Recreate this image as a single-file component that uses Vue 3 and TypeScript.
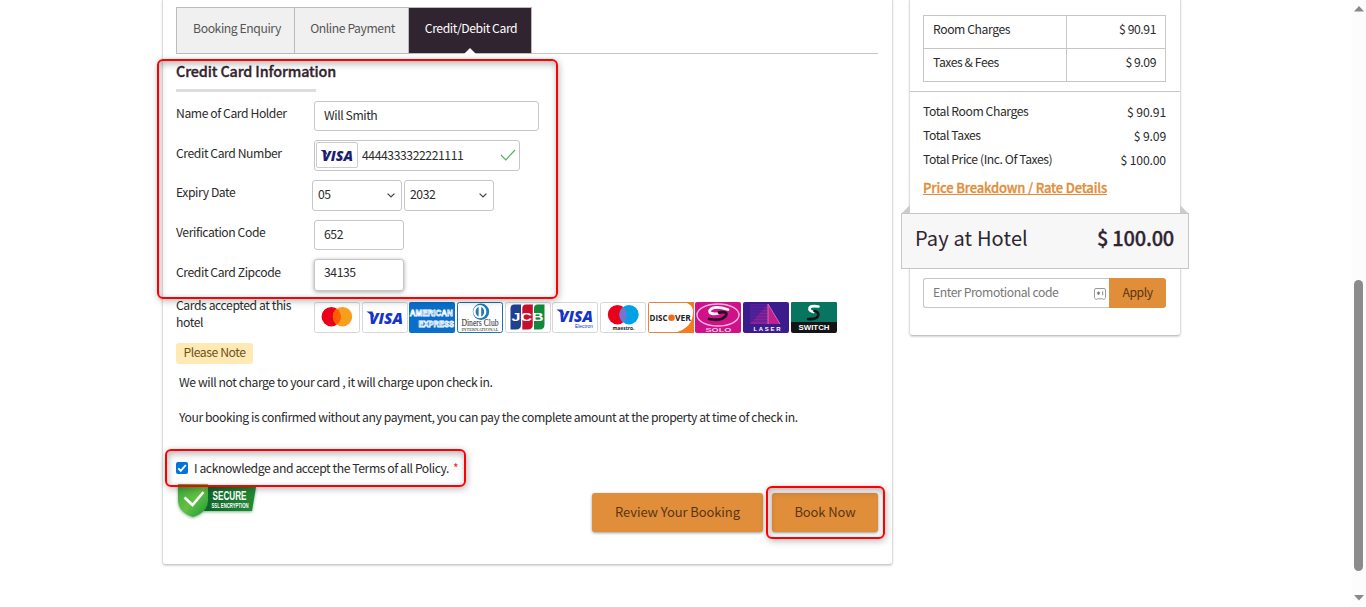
<script setup lang="ts">
import { ref } from 'vue'

interface Line { label: string; value: string }

const tabs: string[] = ['Booking Enquiry', 'Online Payment', 'Credit/Debit Card']
const activeTab = ref<number>(2)
const holder = ref<string>('Will Smith')
const cardNumber = ref<string>('4444333322221111')
const month = ref<string>('05')
const year = ref<string>('2032')
const cvv = ref<string>('652')
const zip = ref<string>('34135')
const promo = ref<string>('')
const accepted = ref<boolean>(true)

const charges: Line[] = [
  { label: 'Room Charges', value: '$ 90.91' },
  { label: 'Taxes & Fees', value: '$ 9.09' },
]
const totals: Line[] = [
  { label: 'Total Room Charges', value: '$ 90.91' },
  { label: 'Total Taxes', value: '$ 9.09' },
  { label: 'Total Price (Inc. Of Taxes)', value: '$ 100.00' },
]
</script>

<template>
  <div class="page">
    <main class="panel">
      <nav class="tabs">
        <button
          v-for="(t, i) in tabs"
          :key="t"
          class="tab"
          :class="['tab-' + i, { active: i === activeTab }]"
          @click="activeTab = i"
        >{{ t }}</button>
      </nav>

      <h2 class="title">Credit Card Information</h2>
      <div class="rule"></div>

      <div class="form">
        <div class="row">
          <label>Name of Card Holder</label>
          <input v-model="holder" class="field wide" />
        </div>
        <div class="row">
          <label>Credit Card Number</label>
          <div class="field number">
            <span class="brand">
              <svg width="40" height="25" viewBox="0 0 40 25">
                <text x="5" y="17.5" textLength="31" lengthAdjust="spacingAndGlyphs" class="visa navy">VISA</text>
                <path d="M3.5 7h5l2 5z" fill="#1a1f71" />
              </svg>
            </span>
            <input v-model="cardNumber" class="bare" />
            <svg class="tick" width="16" height="12" viewBox="0 0 16 12">
              <path d="M1 6l4.8 4.8L15 1" fill="none" stroke="#4db560" stroke-width="1.2" />
            </svg>
          </div>
        </div>
        <div class="row expiry">
          <label>Expiry Date</label>
          <div class="selects">
            <button class="field select">{{ month }}<svg width="8" height="5" viewBox="0 0 8 5"><path d="M.6 .6L4 4 7.4 .6" /></svg></button>
            <button class="field select">{{ year }}<svg width="8" height="5" viewBox="0 0 8 5"><path d="M.6 .6L4 4 7.4 .6" /></svg></button>
          </div>
        </div>
        <div class="row">
          <label>Verification Code</label>
          <input v-model="cvv" class="field small" />
        </div>
        <div class="row last">
          <label>Credit Card Zipcode</label>
          <input v-model="zip" class="field small focused" />
        </div>
      </div>

      <div class="accepted">
        <div class="accepted-label">Cards accepted at this hotel</div>
        <div class="cards">
          <svg viewBox="0 0 46 31">
            <rect class="frame" x=".5" y=".5" width="45" height="30" rx="2" />
            <circle cx="17.3" cy="14.7" r="9.7" fill="#eb001b" />
            <circle cx="28.5" cy="14.7" r="9.7" fill="#f79e1b" />
            <path d="M22.9 6.8a9.7 9.7 0 010 15.8 9.7 9.7 0 010-15.8" fill="#ff5f00" />
          </svg>
          <svg viewBox="0 0 46 31">
            <rect class="frame" x=".5" y=".5" width="45" height="30" rx="2" />
            <text x="7" y="21.5" textLength="34" lengthAdjust="spacingAndGlyphs" class="visa blue">VISA</text>
            <path d="M4.5 9.5h6l2 6z" fill="#1434cb" />
          </svg>
          <svg viewBox="0 0 46 31">
            <rect width="46" height="31" rx="2" fill="#0a6fcc" />
            <text x=".8" y="14.4" textLength="43" lengthAdjust="spacingAndGlyphs" class="amex">AMERICAN</text>
            <text x="9.5" y="24.6" textLength="35.5" lengthAdjust="spacingAndGlyphs" class="amex">EXPRESS</text>
          </svg>
          <svg viewBox="0 0 46 31">
            <rect x=".5" y=".5" width="45" height="30" rx="2" fill="#fff" stroke="#1f71a8" />
            <circle cx="24" cy="9.7" r="8.2" fill="#2179b4" />
            <circle cx="22.8" cy="9.7" r="6.6" fill="#fff" />
            <path d="M21.6 5a5.200 5.200 0 000 9.400zM24.200 5a5.200 5.200 0 010 9.400z" fill="#2179b4" />
            <text x="4.5" y="24" textLength="37" lengthAdjust="spacingAndGlyphs" class="diners">Diners Club</text>
            <text x="4.5" y="28.5" textLength="37" lengthAdjust="spacingAndGlyphs" class="intl">INTERNATIONAL</text>
          </svg>
          <svg viewBox="0 0 46 31">
            <rect class="frame" x=".5" y=".5" width="45" height="30" rx="2" />
            <path d="M9.500 2.500h6.500v20q0 5-5 5H5.500v-21q0-4 4-4z" fill="#1f3f92" />
            <path d="M21.300 2.500h6.500v20q0 5-5 5h-5.500v-21q0-4 4-4z" fill="#c8102e" />
            <path d="M33 2.500h6.500v20q0 5-5 5H29v-21q0-4 4-4z" fill="#128a3a" />
            <text x="6.500" y="19" textLength="32" lengthAdjust="spacingAndGlyphs" class="jcb">JCB</text>
          </svg>
          <svg viewBox="0 0 46 31">
            <rect class="frame" x=".5" y=".5" width="45" height="30" rx="2" />
            <text x="7" y="19.500" textLength="34" lengthAdjust="spacingAndGlyphs" class="visa blue">VISA</text>
            <path d="M4.500 7.500h6l2 6z" fill="#1434cb" />
            <text x="23" y="26" textLength="18" lengthAdjust="spacingAndGlyphs" class="electron">Electron</text>
          </svg>
          <svg viewBox="0 0 46 31">
            <rect class="frame" x=".5" y=".5" width="45" height="30" rx="2" />
            <circle cx="17.500" cy="12.700" r="9.700" fill="#eb001b" />
            <circle cx="29" cy="12.700" r="9.700" fill="#00a2e5" />
            <path d="M23.200 5a9.700 9.700 0 010 15.400 9.700 9.700 0 010-15.400" fill="#7375cf" />
            <text x="12.500" y="27.800" textLength="22" lengthAdjust="spacingAndGlyphs" class="maestro">maestro.</text>
          </svg>
          <svg viewBox="0 0 46 31">
            <rect x=".5" y=".5" width="45" height="30" rx="1" fill="#fff" stroke="#e8833a" />
            <path d="M46 0v31H26Q46 26 45 8 44 2 36 0z" fill="#f47b20" />
            <text x="1.500" y="18.700" textLength="18" lengthAdjust="spacingAndGlyphs" class="discover">DISC</text>
            <circle cx="23.500" cy="15.700" r="3.300" fill="#f26b1d" />
            <text x="27" y="18.700" textLength="16" lengthAdjust="spacingAndGlyphs" class="discover">VER</text>
          </svg>
          <svg viewBox="0 0 46 31">
            <rect width="46" height="31" rx="2" fill="#cf1289" />
            <ellipse cx="23" cy="13" rx="21" ry="11" fill="none" stroke="#f4b5dc" stroke-width="1.400" />
            <path d="M33 7.500q-14-4.500-18 .5c-2 3.500 3 4.500 8 3.500" fill="none" stroke="#fff" stroke-width="2.800" stroke-linecap="round" />
            <path d="M24 10.500q9-1.500 7 3-4 6-17 3.500" fill="none" stroke="#261022" stroke-width="2.800" stroke-linecap="round" />
            <text x="10.500" y="29.500" textLength="26" lengthAdjust="spacingAndGlyphs" class="solo">SOLO</text>
          </svg>
          <svg viewBox="0 0 46 31">
            <rect width="46" height="31" rx="2" fill="#3b1c8d" />
            <path d="M7 22V2h18v20z" fill="#57209a" />
            <path d="M7 22L25 2v20z" fill="#8a2196" />
            <path d="M25 2l12 20H25z" fill="#c0208e" />
            <path d="M7 4h18M7 7h18M7 10h18M7 13h18M7 16h18M7 19h18" stroke="#3b1c8d" stroke-width=".6" />
            <path d="M25 2L37 22M25 2v20" stroke="#ee88c0" stroke-width=".7" />
            <text x="10.500" y="29" textLength="27" lengthAdjust="spacing" class="laser">LASER</text>
          </svg>
          <svg viewBox="0 0 46 31">
            <rect width="46" height="31" rx="2" fill="#121416" />
            <path d="M2 0h42q2 0 2 2v18H0V2q0-2 2-2z" fill="#087560" />
            <path d="M27.500 4.500q-9-1.500-9 2.500 0 2 4 3" fill="none" stroke="#fff" stroke-width="2.700" stroke-linecap="round" />
            <path d="M23.500 9q5 1 3.500 5-1.500 3.500-10 3" fill="none" stroke="#121416" stroke-width="2.700" stroke-linecap="round" />
            <text x="7.500" y="28.300" textLength="31" lengthAdjust="spacingAndGlyphs" class="switch">SWITCH</text>
          </svg>
        </div>
      </div>

      <div class="badge">Please Note</div>
      <p class="note first">We will not charge to your card , it will charge upon check in.</p>
      <p class="note second">Your booking is confirmed without any payment, you can pay the complete amount at the property at time of check in.</p>

      <div class="terms">
        <button class="check" role="checkbox" :aria-checked="accepted" @click="accepted = !accepted">
          <svg v-if="accepted" width="12" height="12" viewBox="0 0 12 12"><path d="M2.300 6.300l2.500 2.600L9.800 3" fill="none" stroke="#fff" stroke-width="1.900" /></svg>
        </button>
        <span class="terms-text">I acknowledge and accept the Terms of all Policy.</span>
        <span class="star">*</span>
      </div>

      <div class="footer">
        <svg class="ssl" width="84" height="38" viewBox="0 0 84 38">
          <defs>
            <linearGradient id="shield" x1="0" y1="0" x2="1" y2="1">
              <stop offset="0" stop-color="#39a53c" />
              <stop offset=".5" stop-color="#63c044" />
              <stop offset="1" stop-color="#18983b" />
            </linearGradient>
            <linearGradient id="ribbon" x1="0" y1="0" x2="1" y2="0">
              <stop offset="0" stop-color="#0c6428" />
              <stop offset="1" stop-color="#238b36" />
            </linearGradient>
          </defs>
          <path d="M28 4h52l-4 24H28z" fill="url(#ribbon)" class="soft" />
          <path d="M2 1h30v16q0 12-15 17Q2 29 2 17z" fill="url(#shield)" class="soft" />
          <path d="M8.500 14.500l8 7.500L27.500 9" fill="none" stroke="#fff" stroke-width="2.600" />
          <text x="36.500" y="17" textLength="34" lengthAdjust="spacingAndGlyphs" class="secure">SECURE</text>
          <text x="35.500" y="25" textLength="37" lengthAdjust="spacingAndGlyphs" class="encryption">SSL ENCRYPTION</text>
        </svg>
        <div class="actions">
          <button class="cta review">Review Your Booking</button>
          <button class="cta book">Book Now</button>
        </div>
      </div>
    </main>

    <aside class="side">
      <div class="charges">
        <div v-for="c in charges" :key="c.label" class="charge">
          <span class="charge-label">{{ c.label }}</span>
          <span class="charge-value">{{ c.value }}</span>
        </div>
      </div>
      <div class="totals">
        <div v-for="t in totals" :key="t.label" class="total">
          <span>{{ t.label }}</span>
          <span class="amount">{{ t.value }}</span>
        </div>
        <a class="breakdown">Price Breakdown / Rate Details</a>
      </div>
      <div class="folds"><i class="fold left"></i><i class="fold right"></i></div>
      <div class="pay">
        <span class="pay-label">Pay at Hotel</span>
        <span class="pay-value">$ 100.00</span>
      </div>
      <div class="promo">
        <div class="promo-box">
          <input v-model="promo" placeholder="Enter Promotional code" />
          <svg width="12" height="12" viewBox="0 0 12 12">
            <path d="M3.500 10.800l-1.500.7-.9-.8-.6-1V2Q.500.500 2 .500h8Q11.500.500 11.500 2v7.700l-.6 1-.9.800-1.500-.7z" fill="none" stroke="#9a9a9a" />
            <path d="M4.500 3.400v3.600M2.900 4.300l3.200 1.800M6.100 4.300L2.900 6.100M8.700 3.300v4" stroke="#777" stroke-width=".9" />
          </svg>
        </div>
        <button class="apply">Apply</button>
      </div>
    </aside>

    <div class="mark mark-form"></div>
    <div class="mark mark-terms"></div>
    <div class="mark mark-book"></div>

    <div class="scroll">
      <svg width="10" height="6" viewBox="0 0 10 6"><path d="M5 0l5 5.500H0z" fill="#888" /></svg>
      <div class="thumb"></div>
      <svg width="10" height="6" viewBox="0 0 10 6"><path d="M0 0h10L5 5.500z" fill="#888" /></svg>
    </div>
  </div>
</template>

<style>
body { margin: 0; background: #fff; overflow: hidden; }
</style>

<style scoped>
.page, .page * { box-sizing: border-box; }
.page {
  position: relative;
  display: flex;
  align-items: flex-start;
  width: 1366px;
  height: 607px;
  overflow: hidden;
  background: #fff;
  color: #2b2b2b;
  font: 12.2px/18px "Noto Sans CJK SC", "Noto Sans", sans-serif;
  letter-spacing: -.43px;
}
svg text { letter-spacing: 0; }
button, input { font: inherit; color: inherit; letter-spacing: inherit; padding: 0; margin: 0; border: 0; outline: 0; background: none; }
.panel {
  width: 731px;
  height: 565px;
  margin-left: 162px;
  padding: 7px 14px 0 13px;
  border: 1px solid #ddd;
  border-top: 0;
  border-bottom-color: #ccc;
  border-radius: 0 0 4px 4px;
  box-shadow: 0 1px 2px rgba(0, 0, 0, .16);
}
.tabs { display: flex; height: 47px; border-bottom: 1px solid #c6c6c6; }
.tab {
  position: relative;
  height: 47px;
  padding-bottom: 5px;
  border: 1px solid #bbb;
  border-right: 0;
  background: #f0f0f0;
  color: #555;
  text-align: center;
}
.tab-0 { width: 118px; padding-left: 3px; }
.tab-1 { width: 114px; padding-left: 2px; }
.tab-2 { width: 124px; padding-left: 2px; border-right: 1px solid #bbb; }
.tab.active { background: #2f2430; color: #fff; }
.tab.active::after {
  content: "";
  position: absolute;
  left: 55px;
  bottom: -1px;
  border: 6px solid transparent;
  border-top: 0;
  border-bottom-color: #fff;
}
.title { margin: 7px 0 0; font-size: 14.4px; line-height: 20px; font-weight: 500; letter-spacing: -.13px; color: #32242f; -webkit-text-stroke: .35px #32242f; }
.rule { width: 140px; height: 3px; margin-top: 8px; background: #ddd; }
.form { margin-top: 9px; }
.row { display: flex; height: 39.7px; }
.row label { width: 138px; padding-top: 3px; }
.field { height: 30px; border: 1px solid #c6c6c6; border-radius: 3px; background: #fff; padding: 0 8px 3px 9px; }
.wide { width: 225px; }
.small { width: 90px; }
.focused { height: 32px; margin-top: -.8px; box-shadow: 0 1px 4px rgba(0, 0, 0, .35); padding-bottom: 5px; }
.number { display: flex; align-items: center; width: 206px; height: 31px; margin-top: -.8px; padding: 0 3px 0 1px; }
.brand { width: 42px; height: 26px; border: 1px solid #ccc; border-radius: 2px; line-height: 0; }
.bare { width: 130px; margin-left: 4px; flex: none; padding-bottom: 1px; }
.tick { margin-left: auto; flex: none; }
.selects { display: flex; gap: 2px; margin-left: -2px; }
.select { display: flex; align-items: center; justify-content: space-between; width: 90px; height: 31px; padding: 0 6px 3px 5px; }
.select svg { margin-top: 2px; }
.select path { fill: none; stroke: #444; stroke-width: 1.2; }
.accepted { display: flex; height: 45px; margin-top: -1.500px; }
.accepted-label { width: 138px; padding-right: 10px; margin-top: -1px; line-height: 17px; }
.cards { display: flex; gap: 1.67px; margin-top: 4px; }
.cards svg { width: 46px; height: 31px; flex: none; }
.frame { fill: #fff; stroke: #d6d6d6; }
.visa { font: italic 800 15px "Open Sans", sans-serif; }
.navy { fill: #1a1f71; font-size: 14px; }
.blue { fill: #1434cb; font-size: 15.500px; }
.amex { font: 700 9px "Liberation Sans", sans-serif; fill: #2b86da; stroke: #fff; stroke-width: .8px; }
.diners { font: 9.500px "Liberation Serif", serif; fill: #222; }
.intl { font: 4.800px "Liberation Serif", serif; fill: #222; }
.jcb { font: 700 10.500px "Liberation Sans", sans-serif; fill: #fff; }
.electron { font: 4.600px "Liberation Sans", sans-serif; fill: #1434cb; }
.maestro { font: 700 5.500px "Open Sans", sans-serif; fill: #222; }
.discover { font: 700 8.500px "Open Sans", sans-serif; fill: #222; }
.solo { font: 700 5.500px "Liberation Sans", sans-serif; fill: #f7c5e2; }
.laser { font: 700 6px "Liberation Sans", sans-serif; fill: #fff; }
.switch { font: 700 6.500px "Liberation Sans", sans-serif; fill: #fff; }
.badge { width: 77px; height: 21px; border-radius: 3px; background: #ffe9b5; color: #6d5319; text-align: center; line-height: 19px; }
.note { margin: 0 0 0 3px; white-space: nowrap; }
.first { margin-top: 9px; }
.second { margin-top: 17px; }
.terms { display: flex; align-items: center; height: 18px; margin-top: 33px; white-space: nowrap; }
.check { width: 12px; height: 12px; border-radius: 2px; background: #0075d7; line-height: 0; }
.terms-text { margin-left: 6px; }
.star { margin-left: 4px; color: #e22; font-size: 12px; }
.footer { display: flex; justify-content: space-between; margin-top: 6px; }
.ssl { overflow: visible; }
.soft { filter: drop-shadow(0 1px 1.500px rgba(20, 120, 40, .55)); }
.secure { font: 700 12px "Liberation Sans", sans-serif; fill: #fff; }
.encryption { font: 700 7px "Liberation Sans", sans-serif; fill: #fff; }
.actions { display: flex; gap: 9px; margin-top: 10px; }
.cta { height: 39px; border-radius: 3px; background: #e08e3a; color: #5b3512; font-size: 13px; padding-bottom: 1px; box-shadow: 0 1px 3px rgba(0, 0, 0, .4); letter-spacing: -.1px; }
.review { width: 171px; }
.book { width: 106px; }
.side {
  width: 272px;
  height: 336px;
  margin-left: 16px;
  padding-top: 15px;
  border: 1px solid #ddd;
  border-top: 0;
  border-bottom-color: #c4c4c4;
  border-radius: 0 0 4px 4px;
  box-shadow: 0 1px 2px rgba(0, 0, 0, .16);
}
.charges { width: 243px; margin-left: 13px; border: 1px solid #c6c6c6; }
.charge { display: flex; height: 32px; line-height: 26px; }
.charge + .charge { height: 33px; border-top: 1px solid #c6c6c6; }
.charge-label { width: 143px; padding-left: 9px; border-right: 1px solid #c6c6c6; }
.charge-value { flex: 1; padding-right: 9px; text-align: right; }
.totals { margin-top: 9px; padding: 10px 14px 0 13px; border-top: 1px solid #c6c6c6; height: 114px; }
.total { display: flex; justify-content: space-between; height: 24px; }
.amount { padding-top: 1px; letter-spacing: -.15px; }
.breakdown { display: block; margin-top: 5px; color: #e08e3a; font-size: 13px; font-weight: 500; letter-spacing: -.17px; text-decoration: underline; -webkit-text-stroke: .3px #e08e3a; white-space: nowrap; }
.folds { display: flex; justify-content: space-between; height: 8px; margin: 0 -8px; }
.fold { border-top: 8px solid transparent; }
.left { border-right: 8px solid #ccc; }
.right { border-left: 8px solid #ccc; }
.pay { display: flex; justify-content: space-between; height: 56px; margin: 0 -9px; padding: 0 14px 0 13px; border: 1px solid #c6c6c6; background: #f7f7f7; color: #2f2430; line-height: 48px; white-space: nowrap; }
.pay-label { font-size: 20px; letter-spacing: .15px; }
.pay-value { font-size: 20px; font-weight: 500; letter-spacing: -.22px; -webkit-text-stroke: .3px #2f2430; }
.promo { display: flex; width: 243px; height: 30px; margin: 9px 0 0 13px; }
.promo-box { display: flex; align-items: center; width: 186px; padding: 0 2px 0 9px; border: 1px solid #c6c6c6; border-right: 0; border-radius: 3px 0 0 3px; }
.promo-box input { width: 161px; padding-bottom: 3px; }
.promo-box svg { margin-top: 2px; }
.promo-box input::placeholder { color: #777; opacity: 1; }
.apply { width: 57px; border-radius: 0 3px 3px 0; background: #e08e3a; color: #5b3512; padding-bottom: 3px; }
.mark { position: absolute; border: 2px solid #f00; border-radius: 6px; box-shadow: 1px 2px 7px rgba(0, 0, 0, .28), inset 1px 3px 7px rgba(0, 0, 0, .28); pointer-events: none; }
.mark-form { left: 157px; top: 59px; width: 401px; height: 240px; }
.mark-terms { left: 165px; top: 449px; width: 301px; height: 38px; }
.mark-book { left: 766px; top: 486px; width: 119px; height: 53px; }
.scroll { display: flex; flex-direction: column; align-items: center; width: 15px; height: 607px; margin-left: auto; padding: 6px 0 6px; background: #fcfcfc; }
.scroll svg { flex: none; }
.thumb { width: 9px; height: 291px; margin: 268px 0 auto; border-radius: 5px; background: #8b8b8b; flex: none; }
</style>
